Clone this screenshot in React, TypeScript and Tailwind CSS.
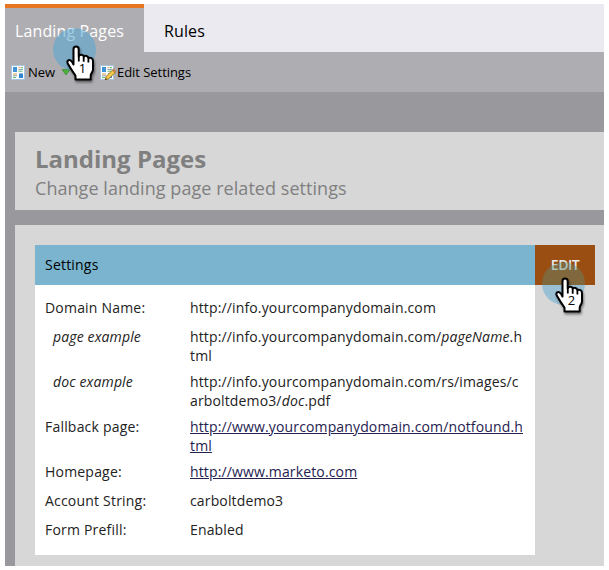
import type { ReactNode } from "react";

function PageIcon({ pencil = false }: { pencil?: boolean }) {
  return (
    <svg width="17" height="17" viewBox="0 0 17 17" className="shrink-0">
      <rect x="0.5" y="1.5" width="13" height="14" fill="#fbfdff" stroke="#a9c4dd" />
      <rect x="2" y="3" width="4" height="5" fill="#3f93d8" />
      <rect x="8" y="9.5" width="4" height="4.5" fill="#2f83d0" />
      <path d="M7.5 3.7h2M2 10h4" stroke="#e79a4a" />
      <path d="M7.5 5.5h4.5M2 11.7h4" stroke="#93a6b5" />
      <path d="M10 3.7h2M7.5 7.2h4M2 13.4h3" stroke="#59b66b" />
      {pencil && (
        <>
          <path d="M5.2 15.8l1-3.5 6.4-6.3 2.6 2.5-6.4 6.4z" fill="#f4c94c" stroke="#8a641c" strokeWidth="0.8" />
          <path d="M12.3 6.2l1.2-1.2 2.5 2.4-1.1 1.2z" fill="#d98c68" stroke="#8a641c" strokeWidth="0.5" />
          <path d="M5.2 15.8l.5-1.7 1.3 1.2z" fill="#3a2c14" />
        </>
      )}
    </svg>
  );
}

function Pointer({ step }: { step: string }) {
  return (
    <div className="relative h-[38px] w-[32px]">
      <svg width="32" height="38" viewBox="0 0 32 38" className="drop-shadow-[1px_2px_1px_rgba(0,0,0,0.45)]">
        <path
          d="M8.5 20.5V5.2C8.5 1.5 13.7 1.5 13.7 5.2V12.2C14.9 10 18.3 10.2 18.7 12.6C20.2 11.2 23 11.8 23.4 14.2C25.4 13.2 28 14.2 28 17V25.5C28 28 25.7 29.6 25.7 31.7V35.5H10.5V31.7C9 29.2 6.3 25.8 4.4 22.3C2.2 19 1.6 17.7 3.2 16.4C5 15.2 7 17.2 8.5 20.5Z"
          fill="#fff"
          stroke="#000"
          strokeWidth="2"
          strokeLinejoin="round"
        />
        <path d="M13.8 12v5.5M18.7 13v4.7M23.4 14.6v4" stroke="#000" strokeWidth="1.8" fill="none" />
      </svg>
      <span className="absolute left-[12px] top-[16px] w-[11px] text-center font-['Open_Sans',sans-serif] text-[13px] leading-[16px] text-black">
        {step}
      </span>
    </div>
  );
}

function Row({ label, example = false, children }: { label: string; example?: boolean; children: ReactNode }) {
  return (
    <div className="flex min-h-[29px] pb-[7px] leading-[19px]">
      <div className={example ? "w-[145px] shrink-0 pl-2 italic" : "w-[145px] shrink-0 tracking-[0.2px]"}>{label}</div>
      <div className="w-[335px] break-all">{children}</div>
    </div>
  );
}

export default function App() {
  return (
    <div className="h-[570px] w-[609px] overflow-hidden bg-white pl-[5px] pt-1 font-['Open_Sans','Noto_Sans',sans-serif] text-black">
      <div className="relative h-[562px] w-[599px] bg-[#99989d]">
        <nav className="flex h-12 bg-[#ebeaf1] text-[16px] tracking-[0.13px]">
          <div className="w-[139px] border-t-4 border-[#e77621] bg-[#aeadb2] pl-[10px] leading-[46px] text-white">
            Landing Pages
          </div>
          <div className="pl-5 pt-1 leading-[46px]">Rules</div>
        </nav>
        <div className="flex h-10 items-center bg-[#aeadb2] pl-[6px] text-[13px]">
          <PageIcon />
          <span className="w-[33px] pt-px">New</span>
          <svg width="10" height="8" viewBox="0 0 10 8" className="mr-[29px] shrink-0">
            <path d="M1 1.5h8L5 7z" fill="#4cb03c" stroke="#2d8429" strokeWidth="0.6" />
          </svg>
          <PageIcon pencil />
          <span className="pt-px tracking-[-0.05px]">Edit Settings</span>
        </div>
        <header className="ml-[10px] mt-10 h-[78px] bg-[#d7d7d7] pl-5 pt-[11px] text-[#808080]">
          <h1 className="text-[24px] font-bold leading-[32px]">Landing Pages</h1>
          <p className="text-[18px] leading-[26px] tracking-[0.05px]">Change landing page related settings</p>
        </header>
        <main className="ml-[10px] mt-[15px] h-[341px] bg-[#d7d7d7] pl-5 pt-5 text-[14px] tracking-[0.14px]">
          <section className="flex">
            <div className="h-[310px] w-[500px] bg-white">
              <h2 className="h-10 bg-[#7ab4ce] pl-[10px] leading-10 tracking-[0.2px]">Settings</h2>
              <div className="pl-[10px] pt-[13px] text-[#222]">
                <Row label="Domain Name:">http://info.yourcompanydomain.com</Row>
                <Row label="page example" example>http://info.yourcompanydomain.com/<i>pageName</i>.html</Row>
                <Row label="doc example" example>http://info.yourcompanydomain.com/rs/images/carboltdemo3/<i>doc</i>.pdf</Row>
                <Row label="Fallback page:"><a className="text-[#25224f] underline">http://www.yourcompanydomain.com/notfound.html</a></Row>
                <Row label="Homepage:"><a className="text-[#25224f] underline">http://www.marketo.com</a></Row>
                <Row label="Account String:">carboltdemo3</Row>
                <Row label="Form Prefill:">Enabled</Row>
              </div>
            </div>
            <button className="h-10 w-[60px] bg-[#9b4e12] pb-[2px] text-[14px] font-semibold tracking-[-0.5px] text-[#e8ecee]">EDIT</button>
          </section>
        </main>
        <div className="absolute left-[48px] top-[24px] size-[43px] rounded-full bg-[#54a7d4]/55" />
        <div className="absolute left-[60px] top-[40px]"><Pointer step="1" /></div>
        <div className="absolute left-[537px] top-[258px] size-[43px] overflow-hidden rounded-full bg-[linear-gradient(to_bottom,rgba(92,140,120,0.42)_23px,rgba(79,163,208,0.45)_23px)]" />
        <div className="absolute left-[549px] top-[272px]"><Pointer step="2" /></div>
      </div>
    </div>
  );
}
